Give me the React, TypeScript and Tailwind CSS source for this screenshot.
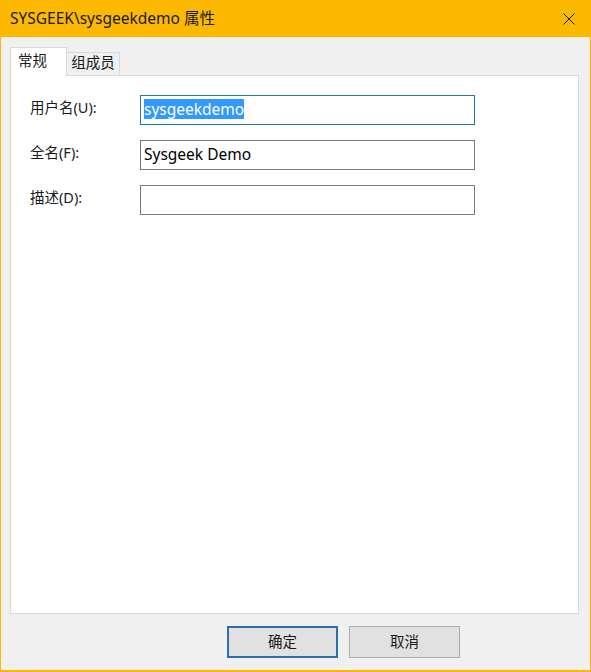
const font = { fontFamily: '"Noto Sans", "Noto Sans CJK SC", sans-serif' };

function Field({ label, value, selected, focused }: { label: string; value?: string; selected?: boolean; focused?: boolean }) {
  return (
    <div className="flex items-center h-[30px]">
      <div className="w-[110px] text-[14.5px] text-[#1a1a1a] -mt-[4px]">{label}</div>
      <div
        className={
          "w-[335px] h-[30px] border bg-white flex items-center px-[3px] pb-[3px] text-[15.5px] text-black " +
          (focused ? "border-[#2a7a9a]" : "border-[#7a7a7a]")
        }
      >
        {selected ? (
          <span className="bg-[#3399ff] text-white leading-[20px]">{value}</span>
        ) : (
          <span className="leading-[20px]">{value}</span>
        )}
      </div>
    </div>
  );
}

export default function App() {
  return (
    <div className="w-[591px] h-[672px] bg-[#fdb900] flex flex-col" style={font}>
      {/* Title bar */}
      <div className="h-[37px] flex items-center justify-between pl-[10px] pr-[14px]">
        <span className="text-[15.5px] text-[#1a1a1a]">SYSGEEK\sysgeekdemo 属性</span>
        <svg width="12" height="12" viewBox="0 0 12 12" className="mr-[2px]">
          <path d="M0.5 0.5 L11.5 11.5 M11.5 0.5 L0.5 11.5" stroke="#1a1a1a" strokeWidth="1" />
        </svg>
      </div>

      {/* Body */}
      <div className="flex-1 mx-px mb-[2px] bg-[#f0f0f0] flex flex-col px-[9px] pt-[10px]">
        {/* Tabs */}
        <div className="flex items-end h-[28px]">
          <div className="w-[57px] h-[29px] bg-white border border-b-0 border-[#d9d9d9] flex items-center pl-[7px] pb-[3px] text-[14.5px] text-[#1a1a1a] relative z-10 -mb-px">
            常规
          </div>
          <div className="w-[53px] h-[23px] bg-[#f0f0f0] border border-l-0 border-b-0 border-[#d9d9d9] flex items-center justify-center pb-[3px] text-[14.5px] text-[#1a1a1a]">
            组成员
          </div>
        </div>
        {/* Panel */}
        <div className="h-[539px] w-[569px] bg-white border border-[#d9d9d9] pl-[19px] pt-[19px] flex flex-col gap-[15px]">
          <Field label="用户名(U):" value="sysgeekdemo" selected focused />
          <Field label="全名(F):" value="Sysgeek Demo" />
          <Field label="描述(D):" value="" />
        </div>
        {/* Buttons */}
        <div className="flex pl-[217px] gap-[11px] mt-[12px]">
          <button className="w-[111px] h-[32px] bg-[#e1e1e1] border-2 border-[#2a6fb0] text-[14.5px] text-[#1a1a1a]">
            确定
          </button>
          <button className="w-[111px] h-[32px] bg-[#e1e1e1] border border-[#adadad] text-[14.5px] text-[#1a1a1a]">
            取消
          </button>
        </div>
      </div>
    </div>
  );
}
